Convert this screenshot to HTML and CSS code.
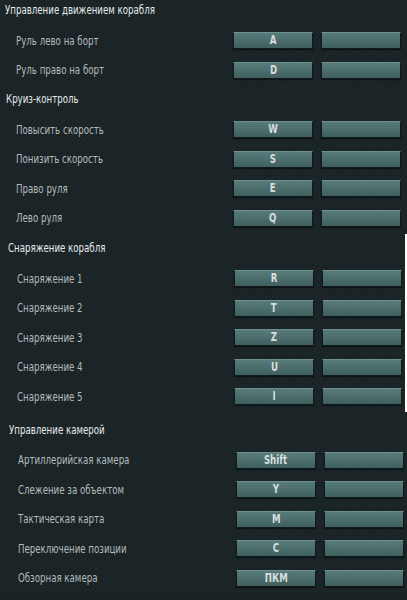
FILE: index.html
```html
<!DOCTYPE html>
<html lang="ru">
<head>
  <meta charset="UTF-8">
  <title>Управление</title>
  <link rel="stylesheet" href="styles.css">
</head>
<body>
  <div class="page">
    <section class="group g1">
      <h2 class="group-title"><span class="narrow">Управление движением корабля</span></h2>
      <div class="bind"><span class="label"><span class="narrow">Руль лево на борт</span></span><span class="key"><span class="cap">A</span></span><span class="key"></span></div>
      <div class="bind"><span class="label"><span class="narrow">Руль право на борт</span></span><span class="key"><span class="cap">D</span></span><span class="key"></span></div>
    </section>

    <section class="group g2">
      <h2 class="group-title"><span class="narrow">Круиз-контроль</span></h2>
      <div class="bind"><span class="label"><span class="narrow">Повысить скорость</span></span><span class="key"><span class="cap">W</span></span><span class="key"></span></div>
      <div class="bind"><span class="label"><span class="narrow">Понизить скорость</span></span><span class="key"><span class="cap">S</span></span><span class="key"></span></div>
      <div class="bind"><span class="label"><span class="narrow">Право руля</span></span><span class="key"><span class="cap">E</span></span><span class="key"></span></div>
      <div class="bind"><span class="label"><span class="narrow">Лево руля</span></span><span class="key"><span class="cap">Q</span></span><span class="key"></span></div>
    </section>

    <section class="group g3">
      <h2 class="group-title"><span class="narrow">Снаряжение корабля</span></h2>
      <div class="bind"><span class="label"><span class="narrow">Снаряжение 1</span></span><span class="key"><span class="cap">R</span></span><span class="key"></span></div>
      <div class="bind"><span class="label"><span class="narrow">Снаряжение 2</span></span><span class="key"><span class="cap">T</span></span><span class="key"></span></div>
      <div class="bind"><span class="label"><span class="narrow">Снаряжение 3</span></span><span class="key"><span class="cap">Z</span></span><span class="key"></span></div>
      <div class="bind"><span class="label"><span class="narrow">Снаряжение 4</span></span><span class="key"><span class="cap">U</span></span><span class="key"></span></div>
      <div class="bind"><span class="label"><span class="narrow">Снаряжение 5</span></span><span class="key"><span class="cap">I</span></span><span class="key"></span></div>
    </section>

    <section class="group g4">
      <h2 class="group-title"><span class="narrow">Управление камерой</span></h2>
      <div class="bind"><span class="label"><span class="narrow">Артиллерийская камера</span></span><span class="key"><span class="cap">Shift</span></span><span class="key"></span></div>
      <div class="bind"><span class="label"><span class="narrow">Слежение за объектом</span></span><span class="key"><span class="cap">Y</span></span><span class="key"></span></div>
      <div class="bind"><span class="label"><span class="narrow">Тактическая карта</span></span><span class="key"><span class="cap">M</span></span><span class="key"></span></div>
      <div class="bind"><span class="label"><span class="narrow">Переключение позиции</span></span><span class="key"><span class="cap">C</span></span><span class="key"></span></div>
      <div class="bind"><span class="label"><span class="narrow">Обзорная камера</span></span><span class="key"><span class="cap">ПКМ</span></span><span class="key"></span></div>
    </section>
  </div>
</body>
</html>
```

FILE: styles.css
```css
body {
  margin: 0;
  background-color: #1a2427;
  font-family: "DejaVu Sans Condensed", "DejaVu Sans", sans-serif;
  font-stretch: condensed;
  overflow: hidden;
}
.page {
  margin-top: -4px;
  background-color: #1a2427;
  background-image: repeating-linear-gradient(-45deg, rgba(255,255,255,0.015) 0 1px, transparent 1px 4px);
}
.narrow {
  display: inline-block;
  white-space: nowrap;
  transform: scaleX(0.8);
  transform-origin: left center;
}
.group {
  padding-right: 6px;
}
.group-title {
  margin: 0;
  height: 20px;
  padding: 4px 0 6px;
  line-height: 20px;
  font-size: 12px;
  font-weight: normal;
  color: #e6eaea;
  padding-left: 5px;
}
.bind {
  display: flex;
  align-items: center;
  height: 29.5px;
  gap: 8px;
}
.label {
  flex: 1;
  padding-left: 16px;
  font-size: 12px;
  color: #b4bbbb;
}
.key {
  box-sizing: border-box;
  width: 80px;
  height: 17px;
  line-height: 15px;
  text-align: center;
  font-size: 12px;
  font-weight: bold;
  color: #d6dfde;
  border: 1px solid #101a1b;
  border-top-color: #6f8f8c;
  background: linear-gradient(#587c7a, #3f5f5e);
  box-shadow: 0 1px 1px rgba(0,0,0,0.5);
}
.cap {
  display: inline-block;
  transform: scaleX(0.8);
}
.g2 .group-title { padding-left: 6px; }
.g3 {
  margin-top: 1px;
  padding-right: 3px;
  border-right: 2px solid #ffffff;
}
.g3 .group-title { padding-left: 8px; }
.g3 .label { padding-left: 17px; }
.g4 {
  margin-top: 4px;
  padding-right: 3px;
}
.g4 .group-title { padding-left: 9px; }
.g4 .label { padding-left: 18px; }
```
